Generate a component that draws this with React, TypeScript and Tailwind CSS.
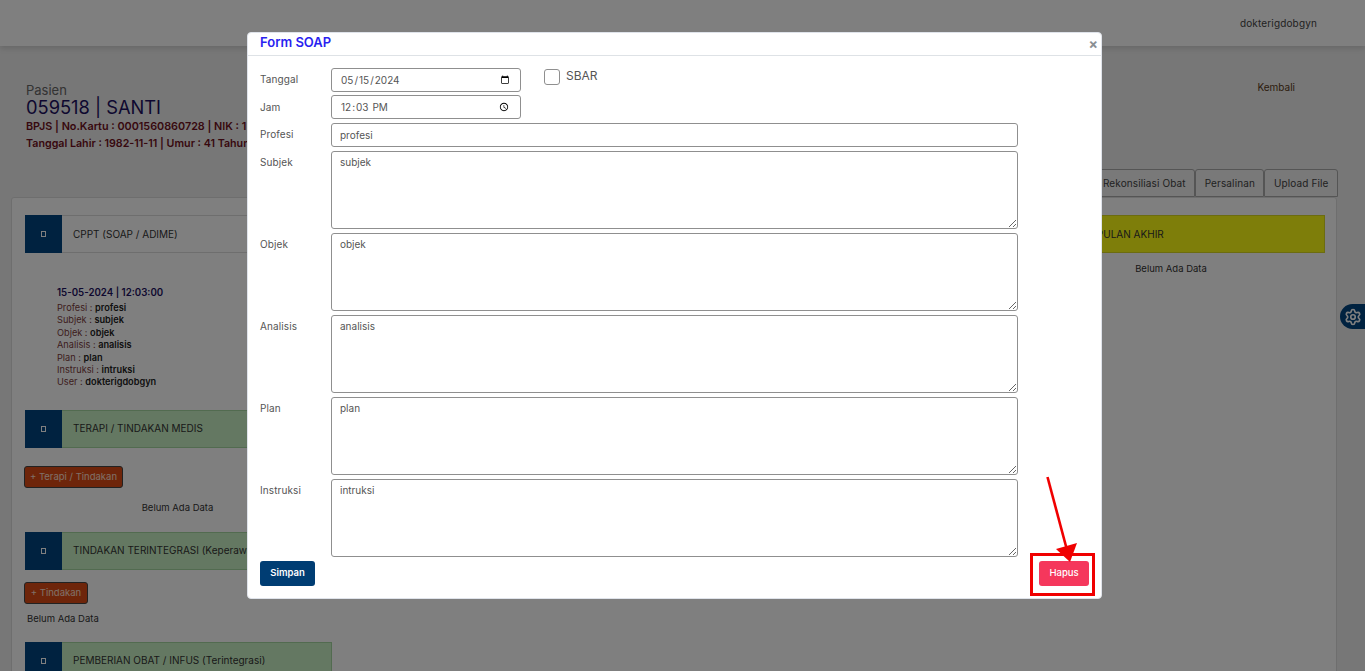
import React from "react";
import { Settings } from "lucide-react";

const Glyph = () => <span className="block w-[5px] h-[6px] border border-white" />;

function SectionHead({ title, bar }: { title: string; bar: string }) {
  return (
    <div className={`flex h-[38px] border ${bar}`}>
      <div className="w-[37px] -ml-px -my-px bg-[#004480] flex items-center justify-center shrink-0 h-[38px]">
        <Glyph />
      </div>
      <div className="pl-[11px] flex items-center text-[10px] text-[#333] whitespace-nowrap overflow-hidden">{title}</div>
    </div>
  );
}

function Info({ k, v }: { k: string; v: string }) {
  return (
    <div className="h-[12.4px] leading-[12.4px] text-[9.2px] text-[#7a3b3b]">
      {k} : <span className="font-semibold text-[#222]">{v}</span>
    </div>
  );
}

function Field({ label, value, area }: { label: string; value: string; area?: boolean }) {
  return (
    <div className="flex">
      <label className="w-[71px] shrink-0 text-[10px] text-[#555] pt-[5px] leading-[12px] tracking-[0.1px]">{label}</label>
      {area ? (
        <textarea
          readOnly
          defaultValue={value}
          className="block w-[687px] h-[78px] border border-[#8f8f8f] rounded-[3px] px-[8px] py-[4px] text-[10px] leading-[12px] text-[#555] outline-none"
        />
      ) : (
        <input
          readOnly
          defaultValue={value}
          className="block w-[687px] h-[24px] border border-[#8f8f8f] rounded-[3px] px-[8px] text-[10px] text-[#555] outline-none"
        />
      )}
    </div>
  );
}

export default function App() {
  return (
    <div className="relative h-[671px] w-full overflow-hidden bg-[#eeeeee] font-['Inter','Liberation_Sans',sans-serif]">
      <header className="h-[46px] bg-white shadow-[0_2px_6px_rgba(0,0,0,0.15)] flex items-center justify-end pr-[48px] text-[10px] tracking-[0.15px] text-[#444]">
        dokterigdobgyn
      </header>

      <div className="flex justify-between pl-[26px] pr-[70px] pt-[38px] h-[123px]">
        <div>
          <div className="text-[13px] leading-[13px] text-[#666]">Pasien</div>
          <div className="text-[18.3px] leading-[21px] text-[#1d1160]">059518 | SANTI</div>
          <div className="text-[10.8px] leading-[16px] font-semibold text-[#6e1020] mt-[1px] mb-[1px] whitespace-nowrap">
            BPJS | No.Kartu : 0001560860728 | NIK : 1
          </div>
          <div className="text-[10.7px] leading-[16px] font-semibold text-[#6e1020] whitespace-nowrap">
            Tanggal Lahir : 1982-11-11 | Umur : 41 Tahun
          </div>
        </div>
        <div className="text-[10px] text-[#5a3a20] -mt-[4px]">Kembali</div>
      </div>

      <div className="flex justify-end pr-[27px] h-[28px]">
        {["Rekonsiliasi Obat", "Persalinan", "Upload File"].map((t) => (
          <div key={t} className="h-[28px] px-[8.5px] flex items-center border border-[#aaa] rounded-t-[3px] text-[10px] tracking-[0.12px] text-[#444] bg-[#f2f2f2] whitespace-nowrap">
            {t}
          </div>
        ))}
      </div>

      <main className="ml-[11px] mr-[28px] bg-white border border-[#ddd] rounded-[3px] pt-[17px] pl-[13px] pr-[11px] flex justify-between h-[500px]">
        <div className="w-[307px]">
          <SectionHead title="CPPT (SOAP / ADIME)" bar="border-[#ddd] bg-white" />
          <div className="pl-[32px] pt-[33px]">
            <div className="text-[9.7px] leading-[14px] font-semibold text-[#1d1160] mb-[2px]">15-05-2024 | 12:03:00</div>
            <Info k="Profesi" v="profesi" />
            <Info k="Subjek" v="subjek" />
            <Info k="Objek" v="objek" />
            <Info k="Analisis" v="analisis" />
            <Info k="Plan" v="plan" />
            <Info k="Instruksi" v="intruksi" />
            <Info k="User" v="dokterigdobgyn" />
          </div>
          <div className="mt-[21px]">
            <SectionHead title="TERAPI / TINDAKAN MEDIS" bar="border-[#a5d6a0] bg-[#c8f0c4]" />
          </div>
          <button className="mt-[18px] -ml-px block h-[22px] w-[99px] rounded-[3px] border border-[#444] bg-[#dd4a14] text-[9.5px] text-[#ffe0d2]">
            + Terapi / Tindakan
          </button>
          <div className="mt-[14px] text-center text-[9.5px] leading-[12px] text-[#333] w-[305px]">Belum Ada Data</div>
          <div className="mt-[18px]">
            <SectionHead title="TINDAKAN TERINTEGRASI (Keperawatan)" bar="border-[#a5d6a0] bg-[#c8f0c4]" />
          </div>
          <button className="mt-[12px] -ml-px block h-[22px] w-[64px] rounded-[3px] border border-[#444] bg-[#dd4a14] text-[9.5px] text-[#ffe0d2]">
            + Tindakan
          </button>
          <div className="mt-[9px] pl-[2px] text-[9.5px] leading-[12px] text-[#333]">Belum Ada Data</div>
          <div className="mt-[17px]">
            <SectionHead title="PEMBERIAN OBAT / INFUS (Terintegrasi)" bar="border-[#a5d6a0] bg-[#c8f0c4]" />
          </div>
        </div>
        <div className="w-[308px]">
          <div className="h-[38px] flex items-center bg-[#fdfd14] border border-[#d8d820] pl-[48px] text-[10px] text-[#333]">
            KESIMPULAN AKHIR
          </div>
          <div className="mt-[10px] text-center text-[9.5px] leading-[12px] text-[#333]">Belum Ada Data</div>
        </div>
      </main>

      <div className="absolute left-[1340px] top-[304px] w-[25px] h-[25px] rounded-l-full bg-[#004480] flex items-center justify-end pr-[3px] text-white">
        <Settings size={18} strokeWidth={2.2} />
      </div>

      <div className="absolute inset-0 bg-black/50" />

      <div className="absolute left-[247px] top-[32px] w-[855px] h-[567px] bg-white rounded-[4px] border border-[#dfe3ea]">
        <div className="relative h-[23px] border-b border-[#dee2e6] pl-[12px] flex items-center">
          <h5 className="text-[13px] font-semibold text-[#2a1ff0] leading-[20px] -mt-[4px]">Form SOAP</h5>
          <span className="absolute right-[3px] top-[4px] text-[14px] leading-[14px] font-bold text-[#8a8f94]">×</span>
        </div>
        <div className="relative pl-[12px] pt-[12px] flex flex-col gap-[4px]">
          <div className="flex h-[24px]">
            <label className="w-[71px] text-[10px] text-[#555] pt-[5px] leading-[12px] tracking-[0.1px]">Tanggal</label>
            <input
              type="date"
              defaultValue="2024-05-15"
              className="w-[190px] h-[24px] border border-[#8f8f8f] rounded-[3px] px-[8px] text-[10px] text-[#555] outline-none"
            />
            <div className="ml-[23px] flex items-start gap-[6px]">
              <span className="block w-[16px] h-[16px] mt-[1px] border border-[#8f8f8f] rounded-[3px]" />
              <span className="text-[12px] leading-[16px] text-[#555]">SBAR</span>
            </div>
          </div>
          <div className="flex h-[24px] -mt-px">
            <label className="w-[71px] text-[10px] text-[#555] pt-[6px] leading-[12px] tracking-[0.1px]">Jam</label>
            <input
              type="time"
              defaultValue="12:03"
              className="w-[190px] h-[24px] border border-[#8f8f8f] rounded-[3px] px-[8px] text-[10px] text-[#555] outline-none"
            />
          </div>
          <Field label="Profesi" value="profesi" />
          <Field label="Subjek" value="subjek" area />
          <Field label="Objek" value="objek" area />
          <Field label="Analisis" value="analisis" area />
          <Field label="Plan" value="plan" area />
          <Field label="Instruksi" value="intruksi" area />
          <div className="flex justify-between w-[829px]">
            <button className="w-[55px] h-[25px] rounded-[3px] bg-[#003d73] text-white text-[9.5px] font-semibold">Simpan</button>
            <button className="w-[50px] h-[25px] rounded-[3px] bg-[#f5375c] text-white text-[9.5px] font-medium">Hapus</button>
          </div>
        </div>
      </div>

      <div className="absolute left-[1030px] top-[553px] w-[65px] h-[43px] border-[3px] border-[#f00000]" />
      <svg className="absolute left-[1040px] top-[470px]" width="50" height="100" viewBox="0 0 50 100">
        <line x1="7.5" y1="7" x2="27" y2="80" stroke="#f00000" strokeWidth="2.6" />
        <polygon points="16,79 37,73 30,92" fill="#f00000" />
      </svg>
    </div>
  );
}
